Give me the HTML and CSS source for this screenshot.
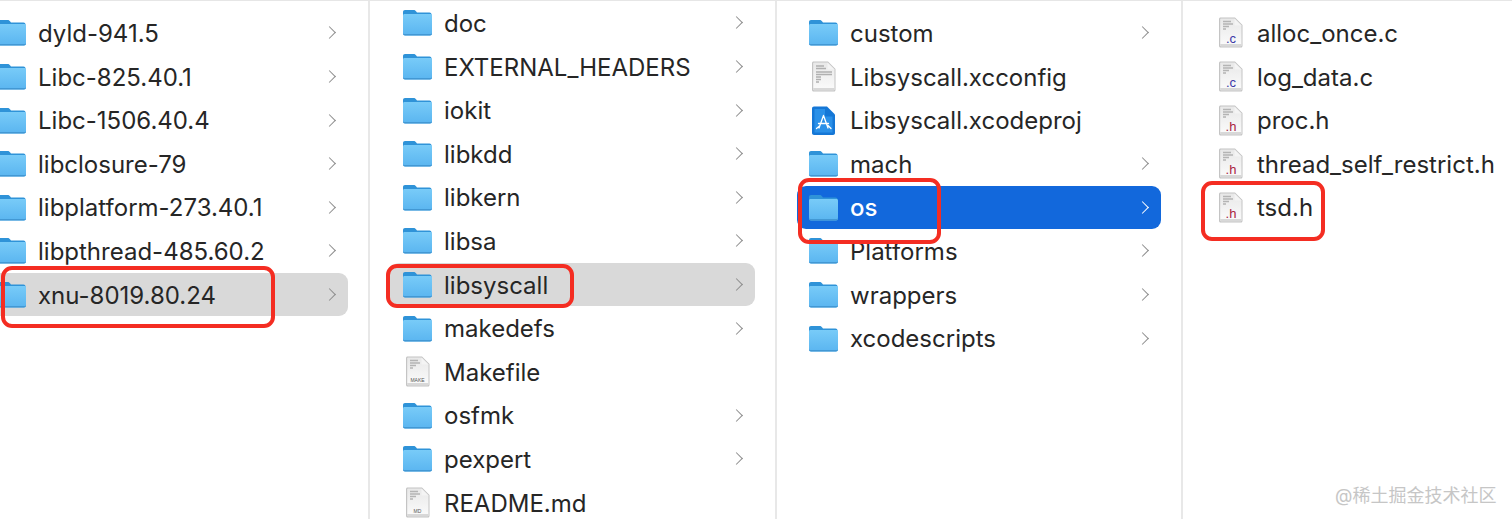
FILE: index.html
```html
<!DOCTYPE html>
<html lang="en">
<head>
    <meta charset="UTF-8">
    <title>Finder columns</title>
    <link rel="stylesheet" href="styles.css">
</head>
<body>
    <!-- Shared icons -->
    <svg class="icon-defs" width="0" height="0">
        <defs>
            <linearGradient id="folderBody" x1="0" y1="0" x2="0" y2="1">
                <stop offset="0" stop-color="#78cbf8"/>
                <stop offset="1" stop-color="#5ab5f0"/>
            </linearGradient>
            <linearGradient id="pageBody" x1="0" y1="0" x2="0" y2="1">
                <stop offset="0" stop-color="#e8e8e8"/>
                <stop offset="1" stop-color="#fbfbfb"/>
            </linearGradient>
            <symbol id="folder" viewBox="0 0 29 27">
                <path d="M2 1h8.500c1.200 0 1.800.4 2.500 1.200l1 1.300h12.500c1.200 0 2 .8 2 2V9H0V3c0-1.200.8-2 2-2z" fill="#2f93d8"/>
                <path d="M1.500 5h26c.9 0 1.500.6 1.500 1.500v18c0 1.200-.8 2-2 2H2c-1.200 0-2-.8-2-2v-18C0 5.600.6 5 1.500 5z" fill="url(#folderBody)"/>
                <path d="M0 24.500c0 1.200.8 2 2 2h25c1.200 0 2-.8 2-2v-1c0 1-.6 1.500-1.500 1.500h-26C.6 25 0 24.500 0 23.500z" fill="#4298d4"/>
            </symbol>
            <symbol id="page" viewBox="0 0 24 31">
                <path d="M1.500.5H16l7.500 7.500v21c0 .8-.6 1.500-1.500 1.500H1.500C.7 30.500 0 29.800 0 29V2C0 1.200.7.500 1.500.500z" fill="#c4c4c4"/>
                <path d="M2 1.500h13.500L22.500 8.500V28.500c0 .5-.3.8-.8.8H2c-.5 0-.8-.3-.8-.8V2.300c0-.5.3-.8.8-.8z" fill="url(#pageBody)"/>
                <path d="M15.500 1.500v7h7z" fill="#f4f4f4"/>
                <path d="M1.200 27h21.300v1.500c0 .5-.3.8-.8.8H2c-.5 0-.8-.3-.8-.8z" fill="#d8d8d8"/>
            </symbol>
            <symbol id="source-lines" viewBox="0 0 24 31">
                <path d="M4 4.500h8M4 7h10M4 9.500h6M4 12h3" stroke="#b4b4b4" stroke-width="1.500" fill="none"/>
            </symbol>
        </defs>
    </svg>

    <div class="browser">
        <!-- Column 1 -->
        <div class="column column-first">
            <div class="row"><svg class="icon-folder"><use href="#folder"/></svg><span class="name">dyld-941.5</span><span class="chevron"></span></div>
            <div class="row"><svg class="icon-folder"><use href="#folder"/></svg><span class="name">Libc-825.40.1</span><span class="chevron"></span></div>
            <div class="row"><svg class="icon-folder"><use href="#folder"/></svg><span class="name">Libc-1506.40.4</span><span class="chevron"></span></div>
            <div class="row"><svg class="icon-folder"><use href="#folder"/></svg><span class="name">libclosure-79</span><span class="chevron"></span></div>
            <div class="row"><svg class="icon-folder"><use href="#folder"/></svg><span class="name">libplatform-273.40.1</span><span class="chevron"></span></div>
            <div class="row"><svg class="icon-folder"><use href="#folder"/></svg><span class="name">libpthread-485.60.2</span><span class="chevron"></span></div>
            <div class="row row-path"><svg class="icon-folder"><use href="#folder"/></svg><span class="name">xnu-8019.80.24</span><span class="chevron"></span></div>
        </div>

        <!-- Column 2, scrolled a little -->
        <div class="column column-scrolled">
            <div class="row"><svg class="icon-folder"><use href="#folder"/></svg><span class="name">doc</span><span class="chevron"></span></div>
            <div class="row"><svg class="icon-folder"><use href="#folder"/></svg><span class="name">EXTERNAL_HEADERS</span><span class="chevron"></span></div>
            <div class="row"><svg class="icon-folder"><use href="#folder"/></svg><span class="name">iokit</span><span class="chevron"></span></div>
            <div class="row"><svg class="icon-folder"><use href="#folder"/></svg><span class="name">libkdd</span><span class="chevron"></span></div>
            <div class="row"><svg class="icon-folder"><use href="#folder"/></svg><span class="name">libkern</span><span class="chevron"></span></div>
            <div class="row"><svg class="icon-folder"><use href="#folder"/></svg><span class="name">libsa</span><span class="chevron"></span></div>
            <div class="row row-path"><svg class="icon-folder"><use href="#folder"/></svg><span class="name">libsyscall</span><span class="chevron"></span></div>
            <div class="row"><svg class="icon-folder"><use href="#folder"/></svg><span class="name">makedefs</span><span class="chevron"></span></div>
            <div class="row">
                <svg class="icon-file" viewBox="0 0 24 31">
                    <use href="#page"/>
                    <use href="#source-lines"/>
                    <text class="file-tag file-tag-small" x="11.500" y="26">MAKE</text>
                </svg>
                <span class="name">Makefile</span>
            </div>
            <div class="row"><svg class="icon-folder"><use href="#folder"/></svg><span class="name">osfmk</span><span class="chevron"></span></div>
            <div class="row"><svg class="icon-folder"><use href="#folder"/></svg><span class="name">pexpert</span><span class="chevron"></span></div>
            <div class="row">
                <svg class="icon-file" viewBox="0 0 24 31">
                    <use href="#page"/>
                    <use href="#source-lines"/>
                    <text class="file-tag file-tag-small" x="11.500" y="26">MD</text>
                </svg>
                <span class="name">README.md</span>
            </div>
        </div>

        <!-- Column 3 -->
        <div class="column column-wide">
            <div class="row"><svg class="icon-folder"><use href="#folder"/></svg><span class="name">custom</span><span class="chevron"></span></div>
            <div class="row">
                <svg class="icon-file" viewBox="0 0 24 31">
                    <use href="#page"/>
                    <path d="M4 5h8M4 7.500h10M4 11h16M4 13.500h16M4 16h5M4 18.500h5M4 21h3" stroke="#b0b0b0" stroke-width="1.400" fill="none"/>
                </svg>
                <span class="name">Libsyscall.xcconfig</span>
            </div>
            <div class="row">
                <svg class="icon-file" viewBox="0 0 24 31">
                    <path d="M2 1.500h13l8 8V28c0 1.200-.8 2-2 2H2c-1.200 0-2-.8-2-2V3.500c0-1.200.8-2 2-2z" fill="#1577d6"/>
                    <path d="M2.500 4h10.500v7.500h7.500v16h-18z" fill="#2a90e8"/>
                    <path d="M11.500 10.500L7 23M11.500 10.500L16 23M6.500 18.500h10M4.500 23.500l3-2.500M16 20.500l3 3" stroke="#ffffff" stroke-width="1.300" fill="none" stroke-linecap="round"/>
                </svg>
                <span class="name">Libsyscall.xcodeproj</span>
            </div>
            <div class="row"><svg class="icon-folder"><use href="#folder"/></svg><span class="name">mach</span><span class="chevron"></span></div>
            <div class="row row-selected"><svg class="icon-folder"><use href="#folder"/></svg><span class="name">os</span><span class="chevron"></span></div>
            <div class="row"><svg class="icon-folder"><use href="#folder"/></svg><span class="name">Platforms</span><span class="chevron"></span></div>
            <div class="row"><svg class="icon-folder"><use href="#folder"/></svg><span class="name">wrappers</span><span class="chevron"></span></div>
            <div class="row"><svg class="icon-folder"><use href="#folder"/></svg><span class="name">xcodescripts</span><span class="chevron"></span></div>
        </div>

        <!-- Column 4 -->
        <div class="column column-last">
            <div class="row">
                <svg class="icon-file" viewBox="0 0 24 31">
                    <use href="#page"/><use href="#source-lines"/>
                    <text class="file-tag file-tag-c" x="12" y="25.500">.c</text>
                </svg>
                <span class="name">alloc_once.c</span>
            </div>
            <div class="row">
                <svg class="icon-file" viewBox="0 0 24 31">
                    <use href="#page"/><use href="#source-lines"/>
                    <text class="file-tag file-tag-c" x="12" y="25.500">.c</text>
                </svg>
                <span class="name">log_data.c</span>
            </div>
            <div class="row">
                <svg class="icon-file" viewBox="0 0 24 31">
                    <use href="#page"/><use href="#source-lines"/>
                    <text class="file-tag file-tag-h" x="12" y="25.500">.h</text>
                </svg>
                <span class="name">proc.h</span>
            </div>
            <div class="row">
                <svg class="icon-file" viewBox="0 0 24 31">
                    <use href="#page"/><use href="#source-lines"/>
                    <text class="file-tag file-tag-h" x="12" y="25.500">.h</text>
                </svg>
                <span class="name">thread_self_restrict.h</span>
            </div>
            <div class="row">
                <svg class="icon-file" viewBox="0 0 24 31">
                    <use href="#page"/><use href="#source-lines"/>
                    <text class="file-tag file-tag-h" x="12" y="25.500">.h</text>
                </svg>
                <span class="name">tsd.h</span>
            </div>
        </div>
    </div>

    <!-- Red frames drawn over the screenshot -->
    <div class="mark mark-xnu"></div>
    <div class="mark mark-libsyscall"></div>
    <div class="mark mark-os"></div>
    <div class="mark mark-tsd"></div>

    <div class="watermark">@稀土掘金技术社区</div>
</body>
</html>
```

FILE: styles.css
```css
body {
    margin: 0;
    background: #ffffff;
    font-family: Inter, "Liberation Sans", "Noto Sans CJK SC", sans-serif;
    overflow: hidden;
}
.icon-defs {
    position: absolute;
}
.browser {
    display: flex;
    height: 518px;
    border-top: 1px solid #e6e6e6;
    overflow: hidden;
}
.column {
    flex: 0 0 407px;
    box-sizing: border-box;
    padding: 10.2px 20px 0 20px;
    border-right: 2px solid #e8e8e8;
    overflow: hidden;
}
.column-first {
    flex-basis: 370px;
    padding-left: 0;
}
.column-first .row {
    margin-left: -16px;
}
.column-scrolled {
    padding-top: 0.2px;
}
.column-wide {
    flex-basis: 406px;
}
.column-wide .row {
    padding-left: 12px;
}
.column-last {
    flex: 1;
    border-right: none;
}
.row {
    display: flex;
    align-items: center;
    gap: 12px;
    height: 43.6px;
    padding: 0 12.5px 0 13px;
    box-sizing: border-box;
    border-radius: 9px;
}
.icon-folder {
    flex: none;
    width: 29px;
    height: 27px;
}
.icon-file {
    flex: none;
    width: 24px;
    height: 31px;
    margin: 0 2.5px;
}
.name {
    flex: 1;
    padding-top: 1px;
    font-size: 24px;
    color: #262626;
    white-space: nowrap;
}
.chevron {
    flex: none;
    width: 9px;
    height: 9px;
    margin-right: 2px;
    box-sizing: border-box;
    border-top: 1.6px solid #8c8c8c;
    border-right: 1.6px solid #8c8c8c;
    transform: rotate(45deg);
}
.row-path {
    background: #d9d9d9;
}
.row-selected {
    background: #1268dc;
}
.row-selected .name {
    color: #ffffff;
    font-weight: 500;
}
.row-selected .chevron {
    border-color: #ffffff;
}
.file-tag {
    font-family: "Liberation Sans", sans-serif;
    text-anchor: middle;
    font-size: 13px;
}
.file-tag-small {
    font-size: 5px;
    fill: #555555;
}
.file-tag-c {
    fill: #3a39a6;
}
.file-tag-h {
    fill: #a8233f;
}
.mark {
    position: absolute;
    box-sizing: border-box;
    border: 4.5px solid #f42d22;
    border-radius: 11px;
}
.mark-xnu {
    left: 1px;
    top: 266px;
    width: 274px;
    height: 62px;
}
.mark-libsyscall {
    left: 386px;
    top: 264px;
    width: 188px;
    height: 44px;
}
.mark-os {
    left: 798px;
    top: 178px;
    width: 143px;
    height: 66px;
}
.mark-tsd {
    left: 1201px;
    top: 181px;
    width: 124px;
    height: 60px;
}
.watermark {
    position: absolute;
    left: 1335px;
    top: 481px;
    font-size: 18px;
    color: #c6c6c6;
    white-space: nowrap;
}
```
